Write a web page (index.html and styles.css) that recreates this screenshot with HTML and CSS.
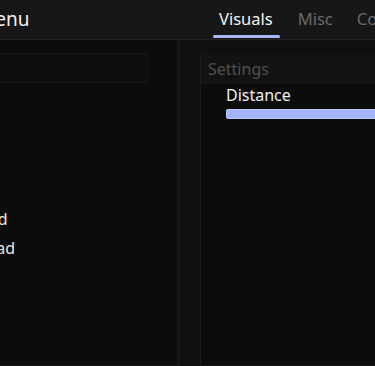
FILE: index.html
```html
<!DOCTYPE html>
<html lang="en">
<head>
  <meta charset="UTF-8">
  <meta name="viewport" content="width=device-width, initial-scale=1.0">
  <title>Menu</title>
  <link rel="stylesheet" href="styles.css">
</head>
<body>
  <div class="app">
    <header class="topbar">
      <div class="title">Menu</div>
      <nav class="tabs">
        <div class="tab active">Visuals</div>
        <div class="tab">Misc</div>
        <div class="tab">Config</div>
      </nav>
    </header>

    <main class="content">
      <aside class="sidebar">
        <div class="search"></div>
        <ul class="features">
          <li>Speed</li>
          <li>Upload</li>
        </ul>
      </aside>

      <section class="panel">
        <div class="panel-head">Settings</div>
        <div class="panel-body">
          <label class="field-label">Distance</label>
          <div class="slider"><div class="slider-fill"></div></div>
        </div>
      </section>
    </main>
  </div>
</body>
</html>
```

FILE: styles.css
```css
html, body {
  margin: 0;
  padding: 0;
  background-color: #0d0d0d;
  overflow: hidden;
}

body {
  font-family: 'Noto Sans', 'Open Sans', sans-serif;
  color: #ececec;
}

/* window is wider than the viewport, left side scrolled out */
.app {
  width: 640px;
  height: 366px;
  margin-left: -40px;
  display: flex;
  flex-direction: column;
}

.topbar {
  height: 39px;
  background-color: #171717;
  border-bottom: 1px solid #222;
  display: grid;
  grid-template-columns: 253px auto;
  align-items: stretch;
}

.title {
  padding-left: 18px;
  font-size: 19px;
  line-height: 38px;
  color: #f2f2f2;
}

.tabs {
  display: flex;
  gap: 12px;
}

.tab {
  position: relative;
  padding: 0 6px;
  font-size: 16.5px;
  line-height: 37px;
  color: #6b6b6b;
}

.tab.active {
  padding: 0 7px 0 6px;
  color: #f4f4f4;
}

.tab.active::after {
  content: '';
  position: absolute;
  left: 0;
  right: 0;
  bottom: 1px;
  height: 3px;
  border-radius: 2px;
  background-color: #a9b7f6;
}

.content {
  flex: 1;
  display: flex;
  background-color: #101010;
}

.sidebar {
  width: 207px;
  margin-left: 10px;
  padding-top: 13px;
  background-color: #0c0c0c;
  border-right: 3px solid #171717;
  border-bottom: 1px solid #1a1a1a;
}

.search {
  width: 176px;
  height: 28px;
  border: 1px solid #161616;
  background-color: #0e0e0e;
}

.features {
  list-style: none;
  margin: 122px 0 0 -9px;
  padding: 0;
}

.features li {
  font-size: 16px;
  line-height: 29px;
  color: #e6e6e6;
}

.panel {
  flex: 1;
  margin: 13px 0 0 20px;
  background-color: #0c0c0c;
  border-left: 1px solid #1b1b1b;
  border-bottom: 1px solid #1a1a1a;
}

.panel-head {
  height: 30px;
  padding-left: 7px;
  background-color: #121212;
  border-bottom: 1px solid #171717;
  font-size: 16px;
  line-height: 32px;
  color: #4f4f4f;
}

.panel-body {
  padding: 0 0 0 25px;
}

.field-label {
  display: block;
  font-size: 16px;
  line-height: 23px;
  color: #f0f0f0;
}

.slider {
  margin-top: 2px;
  height: 10px;
  border-radius: 3px;
  background-color: #2a2f45;
  overflow: hidden;
}

.slider-fill {
  width: 100%;
  height: 100%;
  background-color: #a5b4f6;
  box-shadow: inset 0 0 0 1px #bcc7fa;
}
```
